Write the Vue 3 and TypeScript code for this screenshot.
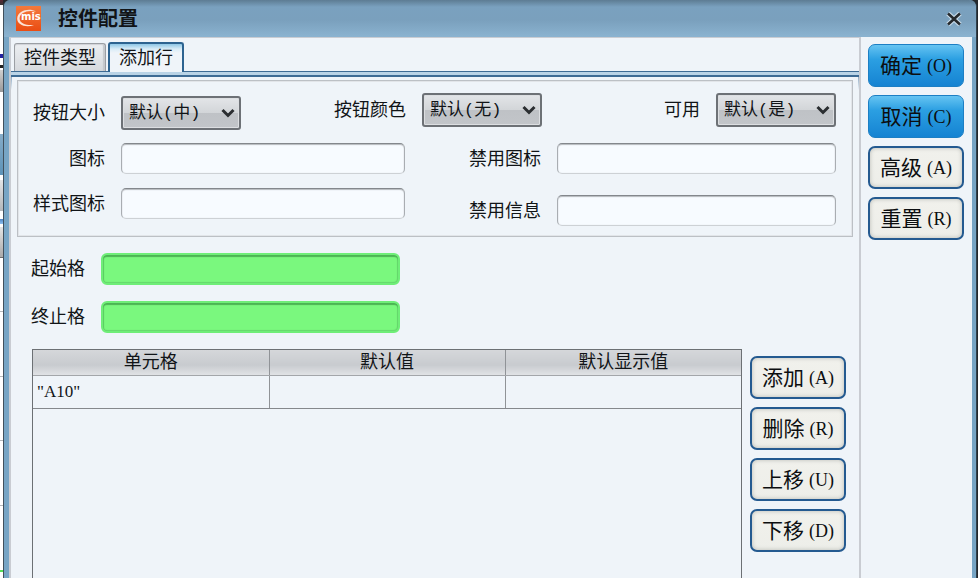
<script setup lang="ts">
import { ref } from 'vue'

interface Action {
  text: string
  hotkey: string
  primary?: boolean
}

interface CellRow {
  cell: string
  value: string
  display: string
}

const tabs = ['控件类型', '添加行']
const activeTab = ref('添加行')

const dialogActions: Action[] = [
  { text: '确定', hotkey: 'O', primary: true },
  { text: '取消', hotkey: 'C', primary: true },
  { text: '高级', hotkey: 'A' },
  { text: '重置', hotkey: 'R' },
]

const rowActions: Action[] = [
  { text: '添加', hotkey: 'A' },
  { text: '删除', hotkey: 'R' },
  { text: '上移', hotkey: 'U' },
  { text: '下移', hotkey: 'D' },
]

const choices = [
  { id: 'size', label: '按钮大小', value: '默认(中)' },
  { id: 'color', label: '按钮颜色', value: '默认(无)' },
  { id: 'enabled', label: '可用', value: '默认(是)' },
]

const columns = [
  [
    { id: 'icon', label: '图标' },
    { id: 'style-icon', label: '样式图标' },
  ],
  [
    { id: 'disabled-icon', label: '禁用图标' },
    { id: 'disabled-info', label: '禁用信息' },
  ],
]

const ranges = [
  { id: 'start', label: '起始格' },
  { id: 'end', label: '终止格' },
]

const headers = ['单元格', '默认值', '默认显示值']
const rows: CellRow[] = [{ cell: '"A10"', value: '', display: '' }]
</script>

<template>
  <div class="desktop">
    <div class="backdrop"></div>
    <div class="dialog">
      <header class="titlebar">
        <svg class="logo" viewBox="0 0 25 25" aria-hidden="true">
          <defs>
            <linearGradient id="logo-fill" x1="0" y1="0" x2="0" y2="1">
              <stop offset="0" stop-color="#f47a3c" />
              <stop offset="1" stop-color="#ea4c12" />
            </linearGradient>
          </defs>
          <rect width="25" height="25" fill="url(#logo-fill)" />
          <path d="M20 5.600C13 1.500 1.500 5 1.200 12.500C1 19 10 22 18 19C11 19.600 3.500 18 3.600 12.300C3.800 6.500 12 3.400 20 5.600Z" fill="#fde3d6" />
          <text x="5" y="14" class="logo-text">mis</text>
        </svg>
        <h1>控件配置</h1>
        <button class="close" type="button" aria-label="关闭">
          <svg viewBox="0 0 18 18">
            <path d="M3 3.500L15 14.500M15 3.500L3 14.500" stroke="#c9dcea" stroke-width="5" />
            <path d="M3 3.500L15 14.500M15 3.500L3 14.500" stroke="#25292d" stroke-width="2.600" />
          </svg>
        </button>
      </header>

      <div class="body">
        <main class="content">
          <div class="tabs" role="tablist">
            <button
              v-for="tab in tabs"
              :key="tab"
              type="button"
              role="tab"
              class="tab"
              :class="{ active: tab === activeTab }"
              :aria-selected="tab === activeTab"
              @click="activeTab = tab"
            >{{ tab }}</button>
          </div>

          <section class="pane">
            <div class="group">
              <div class="choices">
                <div v-for="c in choices" :key="c.id" class="choice" :class="c.id">
                  <label :for="c.id">{{ c.label }}</label>
                  <div class="select-box">
                    <select :id="c.id">
                      <option>{{ c.value }}</option>
                    </select>
                    <svg class="chevron" viewBox="0 0 14 10">
                      <path d="M1.500 2L7 7.500L12.500 2" fill="none" stroke="#2b2e31" stroke-width="3" />
                    </svg>
                  </div>
                </div>
              </div>
              <div class="fields">
                <div v-for="(col, i) in columns" :key="i" class="column">
                  <div v-for="f in col" :key="f.id" class="field">
                    <label :for="f.id">{{ f.label }}</label>
                    <input :id="f.id" type="text" />
                  </div>
                </div>
              </div>
            </div>

            <div class="ranges">
              <div v-for="r in ranges" :key="r.id" class="range">
                <label :for="r.id">{{ r.label }}</label>
                <input :id="r.id" type="text" />
              </div>
            </div>

            <div class="grid-area">
              <div class="table-box">
                <table>
                  <thead>
                    <tr>
                      <th v-for="h in headers" :key="h">{{ h }}</th>
                    </tr>
                  </thead>
                  <tbody>
                    <tr v-for="(row, i) in rows" :key="i">
                      <td>{{ row.cell }}</td>
                      <td>{{ row.value }}</td>
                      <td>{{ row.display }}</td>
                    </tr>
                  </tbody>
                </table>
              </div>
              <div class="row-actions">
                <button v-for="a in rowActions" :key="a.text" type="button" class="action">
                  <span>{{ a.text }}</span><span class="hotkey">({{ a.hotkey }})</span>
                </button>
              </div>
            </div>
          </section>
        </main>

        <aside class="side">
          <button
            v-for="a in dialogActions"
            :key="a.text"
            type="button"
            class="action"
            :class="{ primary: a.primary }"
          >
            <span>{{ a.text }}</span><span class="hotkey">({{ a.hotkey }})</span>
          </button>
        </aside>
      </div>
    </div>
  </div>
</template>

<style>
body {
  background: #23282d;
}
</style>

<style scoped>
* {
  box-sizing: border-box;
}

.desktop {
  display: flex;
  height: 100vh;
  padding-right: 1px;
  overflow: hidden;
  color: #111417;
  font-family: "Liberation Sans", "Noto Sans CJK SC", sans-serif;
  font-size: 18px;
  line-height: 24px;
}

button,
input,
select {
  margin: 0;
  color: inherit;
  font: inherit;
}

.backdrop {
  flex: none;
  width: 3px;
  background:
    linear-gradient(#55e055, #55e055) 0 570px / 100% 2px no-repeat,
    linear-gradient(#b5b8bb, #b5b8bb) 0 505px / 100% 1px no-repeat,
    linear-gradient(#b5b8bb, #b5b8bb) 0 440px / 100% 1px no-repeat,
    linear-gradient(#b5b8bb, #b5b8bb) 0 376px / 100% 1px no-repeat,
    linear-gradient(#b5b8bb, #b5b8bb) 0 311px / 100% 1px no-repeat,
    linear-gradient(#e4e4e4, #aaa 96%, #444) 0 227px / 100% 31px no-repeat,
    linear-gradient(#4f86c6, #8fc0ee) 0 219px / 100% 5px no-repeat,
    linear-gradient(#e2e4e6, #b4b7ba) 0 180px / 100% 31px no-repeat,
    linear-gradient(#86acc8, #5d93b8) 0 134px / 100% 41px no-repeat,
    linear-gradient(#d0d0d0, #999) 0 70px / 100% 22px no-repeat,
    linear-gradient(#2222a0, #2222a0) 0 54px / 100% 4px no-repeat,
    linear-gradient(#222, #222) 0 65px / 100% 3px no-repeat,
    linear-gradient(#5a2832, #333) 0 0 / 100% 5px no-repeat,
    #fff;
}

.dialog {
  flex: 1;
  display: flex;
  flex-direction: column;
  min-width: 0;
  padding: 0 4px 0 5px;
  border-left: 1px solid #41505c;
  border-right: 1px solid #31404b;
  border-radius: 7px 7px 0 0;
  background: #77a5c5;
}

.titlebar {
  flex: none;
  display: flex;
  align-items: center;
  height: 37px;
  margin: 0 -4px 0 -5px;
  padding: 0 12px;
  border-radius: 7px 7px 0 0;
  background: linear-gradient(#5d7c93, #7aa1bf 7px, #7aa0bd 20px, #8ab2cf 36px);
}

.logo {
  width: 25px;
  height: 25px;
}

.logo-text {
  fill: #fff;
  font: bold 10px "DejaVu Sans", sans-serif;
}

h1 {
  flex: 1;
  margin: 0 0 0 17px;
  font-size: 20px;
  line-height: 24px;
}

.close {
  width: 20px;
  height: 20px;
  padding: 1px;
  border: 0;
  background: none;
}

.close svg {
  display: block;
  width: 18px;
  height: 18px;
}

.body {
  flex: 1;
  display: flex;
  min-height: 0;
  background: #eff4f9;
}

.content {
  flex: 1;
  display: flex;
  flex-direction: column;
  min-width: 0;
  border: 2px solid #c9ccd2;
  border-width: 1px 2px 0;
}

.tabs {
  display: flex;
  align-items: flex-end;
  gap: 2px;
  height: 33px;
  padding-left: 3px;
}

.tab {
  height: 28px;
  padding: 0 9px;
  border: 1px solid #9b9fa4;
  border-bottom: 0;
  border-radius: 3px 3px 0 0;
  background: linear-gradient(#eceff2, #d6d9dd);
  box-shadow: inset 0 1px 1px #d0d2d6, inset -2px 0 1px #c4c7cb;
  white-space: nowrap;
}

.tab.active {
  z-index: 1;
  height: 30px;
  margin-bottom: -1px;
  border: 2px solid #2d6390;
  border-bottom: 0;
  background: linear-gradient(#8fc7e6, #d9ecf7 5px, #eff4f9 9px);
  box-shadow: none;
}

.pane {
  flex: 1;
  display: flex;
  flex-direction: column;
  min-height: 0;
  padding: 4px 6px 0;
  border-top: 1px solid #3d6b94;
  background:
    linear-gradient(#b9d3e6, #b9d3e6) 0 0 / 100% 3px no-repeat,
    linear-gradient(#3d6b94, #3d6b94) 0 3px / 100% 2px no-repeat,
    linear-gradient(#6b8fb0, #eff4f9) 0 0 / 1px 18px no-repeat,
    linear-gradient(#6b8fb0, #eff4f9) 100% 0 / 1px 18px no-repeat;
}

.group {
  margin-top: 4px;
  padding: 12px 16px 10px 15px;
  border: 1px solid #bcc0c5;
  box-shadow: inset 0 0 0 1px #e2e5e9;
}

.choices {
  display: flex;
  align-items: flex-start;
  height: 37px;
}

.choice {
  display: flex;
  align-items: center;
  gap: 16px;
}

.choice.size {
  align-self: flex-end;
  margin-right: 93px;
}

.choice.enabled {
  margin-left: auto;
}

.select-box {
  position: relative;
}

select {
  display: block;
  width: 120px;
  height: 34px;
  padding: 2px 30px 0 6px;
  border: 2px solid #6d7176;
  border-radius: 3px;
  appearance: none;
  background: linear-gradient(#e3e5e8, #d2d5d8 50%, #bfc2c6 51%, #c2c5c9);
  box-shadow: inset 0 0 0 1px #dcdee1;
  font-family: "Liberation Mono", "Noto Sans CJK SC", monospace;
  font-size: 17px;
}

.chevron {
  position: absolute;
  top: 12px;
  right: 6px;
  width: 14px;
  height: 10px;
  pointer-events: none;
}

.fields {
  display: grid;
  grid-template-columns: 372fr 367fr;
  gap: 64px;
  margin-top: 13px;
}

.column {
  display: flex;
  flex-direction: column;
  gap: 14px;
}

.column:last-child {
  gap: 21px;
}

.field {
  display: flex;
  align-items: center;
  gap: 16px;
}

.field label {
  flex: none;
  width: 72px;
  text-align: right;
}

.field input {
  flex: 1;
  min-width: 0;
  height: 31px;
  padding: 0 8px;
  border: 1px solid;
  border-color: #83878c #a9adb2 #cdd1d5;
  border-radius: 5px;
  background: #f7fbff;
  box-shadow: inset 0 1px 1px #b5b9bd, inset 0 0 1px #d0d4d8;
}

.ranges {
  display: flex;
  flex-direction: column;
  gap: 16px;
  padding: 16px 14px;
}

.range {
  display: flex;
  align-items: center;
  gap: 16px;
}

.range input {
  width: 37%;
  height: 32px;
  padding: 0 8px;
  border: 2px solid #6fee78;
  border-radius: 6px;
  background: #7af87e;
  box-shadow: inset 0 2px 1px #4cb454, inset 1px 0 1px #5dcc64, inset -1px -1px 1px #68d96e;
}

.grid-area {
  flex: 1;
  display: flex;
  gap: 8px;
  min-height: 0;
  padding: 0 7px 0 15px;
}

.table-box {
  flex: 1;
  min-width: 0;
  border: 1px solid #6c7074;
  border-bottom: 0;
}

table {
  width: 100%;
  border-collapse: collapse;
  table-layout: fixed;
}

th {
  height: 25px;
  padding: 0;
  border-bottom: 1px solid #a3a6aa;
  background: linear-gradient(#d5d7da, #c8cbcf 60%, #e0e2e5);
  font-weight: normal;
}

th + th,
td + td {
  border-left: 1px solid #909397;
}

td {
  height: 33px;
  padding: 0 4px;
  border-bottom: 1px solid #85888c;
  font-family: "Liberation Serif", "Noto Sans CJK SC", serif;
  font-size: 17px;
}

.row-actions,
.side {
  display: flex;
  flex-direction: column;
  gap: 8px;
}

.row-actions {
  padding-top: 7px;
}

.side {
  flex: none;
  padding: 7px 8px 0 7px;
}

.action {
  display: flex;
  flex: none;
  align-items: center;
  justify-content: center;
  gap: 5px;
  width: 96px;
  height: 43px;
  padding: 0;
  border: 2px solid #245a90;
  border-radius: 7px;
  background: linear-gradient(#f1f1ec, #edeee9);
  box-shadow: inset 0 0 4px #b9bab4;
  color: #0c0e10;
  font-size: 21px;
}

.action.primary {
  border-width: 1px;
  border-color: #1c7fc4;
  background: linear-gradient(#66c4f2, #2b9fe2 35%, #1583d2);
  box-shadow: none;
}

.hotkey {
  font-family: "Liberation Serif", serif;
  font-size: 18px;
}
</style>
